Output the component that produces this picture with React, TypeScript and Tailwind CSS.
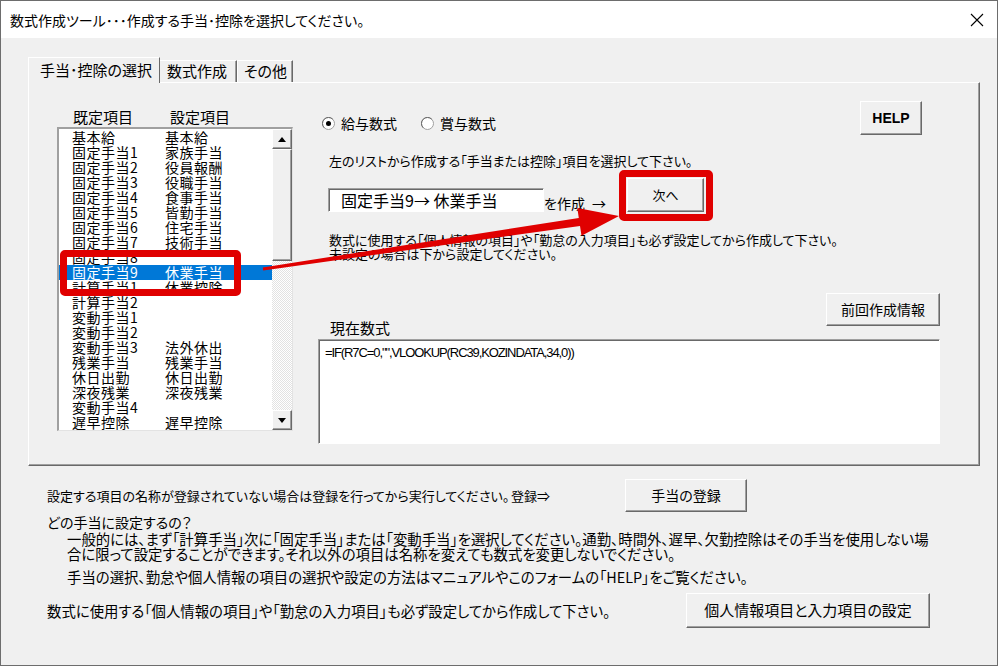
import React from 'react';

const items: [string, string][] = [
  ['基本給', '基本給'],
  ['固定手当1', '家族手当'],
  ['固定手当2', '役員報酬'],
  ['固定手当3', '役職手当'],
  ['固定手当4', '食事手当'],
  ['固定手当5', '皆勤手当'],
  ['固定手当6', '住宅手当'],
  ['固定手当7', '技術手当'],
  ['固定手当8', ''],
  ['固定手当9', '休業手当'],
  ['計算手当1', '休業控除'],
  ['計算手当2', ''],
  ['変動手当1', ''],
  ['変動手当2', ''],
  ['変動手当3', '法外休出'],
  ['残業手当', '残業手当'],
  ['休日出勤', '休日出勤'],
  ['深夜残業', '深夜残業'],
  ['変動手当4', ''],
  ['遅早控除', '遅早控除'],
];

const raised =
  'bg-[#f0f0f0] border border-t-white border-l-white border-r-[#696969] border-b-[#696969] shadow-[inset_-1px_-1px_0_#a0a0a0]';
const sunken =
  'bg-white border border-t-[#a0a0a0] border-l-[#a0a0a0] border-r-white border-b-white shadow-[inset_1px_1px_0_#696969]';

function Radio({ checked }: { checked: boolean }) {
  return (
    <svg width="13" height="13" viewBox="0 0 13 13" className="shrink-0">
      <circle cx="6.5" cy="6.5" r="6" fill="#ffffff" stroke="#a0a0a0" strokeWidth="1" />
      <path d="M2.2 10.8 A6 6 0 0 1 10.8 2.2" fill="none" stroke="#696969" strokeWidth="1" />
      {checked && <circle cx="6.5" cy="6.5" r="2.5" fill="#000000" />}
    </svg>
  );
}

function ScrollBtn({ up }: { up: boolean }) {
  return (
    <div className={`${raised} h-[20px] w-[20px] flex items-center justify-center`}>
      <svg width="8" height="5" viewBox="0 0 8 5">
        {up ? <polygon points="0,5 8,5 4,0" fill="#000" /> : <polygon points="0,0 8,0 4,5" fill="#000" />}
      </svg>
    </div>
  );
}

export default function App() {
  return (
    <div className="relative w-[998px] h-[666px] bg-[#f0f0f0] border border-[#6d6d6d] overflow-hidden font-['Noto_Sans_CJK_JP',sans-serif] text-black [font-feature-settings:'palt']">
      {/* title bar */}
      <div className="h-[37px] bg-white flex items-center justify-between pl-[9px] pr-[13px]">
        <span className="text-[14px] leading-[16px]">数式作成ツール･･･作成する手当･控除を選択してください。</span>
        <svg width="14" height="14" viewBox="0 0 14 14">
          <path d="M1 1 L13 13 M13 1 L1 13" stroke="#000" strokeWidth="1.1" />
        </svg>
      </div>

      {/* body */}
      <div className="pt-[19px]">
        <div className="ml-[27px] w-[952px]">
          {/* tabs */}
          <div className="flex items-end h-[26px] relative z-10">
            <div className="h-[26px] w-[132px] bg-[#f0f0f0] border-t border-l border-t-white border-l-white border-r border-r-[#696969] pl-[11px] pt-[3px] text-[15px] leading-[18px]">
              手当･控除の選択
            </div>
            <div className="h-[22px] w-[77px] border-t border-t-white border-r border-r-[#696969] shadow-[inset_-1px_0_0_#a0a0a0] mb-[1px] pl-[7px] pt-[1px] text-[15px] leading-[18px]">
              数式作成
            </div>
            <div className="h-[22px] w-[56px] border-t border-l border-t-white border-l-white border-r border-r-[#696969] shadow-[inset_-1px_0_0_#a0a0a0] mb-[1px] pl-[6px] pt-[1px] text-[15px] leading-[18px]">
              その他
            </div>
          </div>

          {/* panel */}
          <div className="-mt-[1px] h-[384px] border-t border-l border-t-white border-l-white border-r border-b border-r-[#696969] border-b-[#696969] shadow-[inset_-1px_-1px_0_#a0a0a0] flex">
            {/* left column */}
            <div className="ml-[28px] pt-[26px] w-[236px]">
              <div className="flex h-[15px] text-[15px] leading-[15px] mb-[3px]">
                <span className="ml-[16px] w-[97px]">既定項目</span>
                <span>設定項目</span>
              </div>
              <div className="h-[304px] border-t-2 border-l-2 border-t-[#a0a0a0] border-l-[#a0a0a0] border-r border-b border-r-[#e3e3e3] border-b-[#e3e3e3] bg-white flex">
                <div className="flex-1 pt-[1px] overflow-hidden text-[14px] leading-[15px] [font-feature-settings:normal]">
                  {items.map(([a, b], i) => (
                    <div
                      key={i}
                      className={`h-[15px] flex whitespace-nowrap tracking-[0.5px] ${i === 9 ? 'bg-[#0078d7] text-white' : ''}`}
                    >
                      <span className="w-[106px] pl-[13px]">{a}</span>
                      <span>{b}</span>
                    </div>
                  ))}
                </div>
                <div className="w-[20px] flex flex-col">
                  <ScrollBtn up />
                  <div className={`${raised} h-[112px]`} />
                  <div className="flex-1 bg-[repeating-conic-gradient(#e2e2e2_0%_25%,#ffffff_0%_50%)] bg-[length:2px_2px]" />
                  <ScrollBtn up={false} />
                </div>
              </div>
            </div>

            {/* right column */}
            <div className="ml-[25px] w-[622px] pt-[18px]">
              <div className="flex justify-between items-start">
                <div className="flex items-center mt-[15px] pl-[4px] text-[14px] leading-[15px]">
                  <Radio checked />
                  <span className="ml-[6px] w-[80px]">給与数式</span>
                  <Radio checked={false} />
                  <span className="ml-[6px]">賞与数式</span>
                </div>
                <div className={`${raised} mr-[18px] w-[62px] h-[34px] flex items-center justify-center font-['Liberation_Sans',sans-serif] font-bold text-[14px]`}>
                  HELP
                </div>
              </div>

              <div className="mt-[18px] ml-[11px] text-[13px] leading-[15px] whitespace-nowrap">
                左のリストから作成する「手当または控除」項目を選択して下さい。
              </div>

              <div className="mt-[10px] flex items-end">
                <div className={`${sunken} ml-[10px] w-[216px] h-[24px] pl-[12px] text-[16px] leading-[22px] whitespace-nowrap`}>
                  固定手当9→ 休業手当
                </div>
                <div className="w-[83px] text-[14px] leading-[16px] pb-[1px] whitespace-nowrap">
                  を作成 <span className="ml-[4px]">→</span>
                </div>
                <div className={`${raised} w-[77px] h-[34px] flex items-center justify-center text-[13px]`}>次へ</div>
              </div>

              <div className="mt-[21px] ml-[11px] text-[13px] leading-[14px] whitespace-nowrap">
                <div>数式に使用する「個人情報の項目」や「勤怠の入力項目」も必ず設定してから作成して下さい。</div>
                <div>未設定の場合は下から設定してください。</div>
              </div>

              <div className="mt-[32px] flex justify-between items-end">
                <span className="ml-[12px] mb-[4px] text-[15px] leading-[15px]">現在数式</span>
                <div className={`${raised} mb-[13px] w-[114px] h-[33px] flex items-center justify-center text-[14px]`}>
                  前回作成情報
                </div>
              </div>

              <div className={`${sunken} h-[105px] pl-[6px] pt-[5px]`}>
                <div className="font-['Liberation_Sans',sans-serif] text-[13px] leading-[15px] tracking-[-1.1px] whitespace-nowrap">
                  =IF(R7C=0,&quot;&quot;,VLOOKUP(RC39,KOZINDATA,34,0))
                </div>
              </div>
            </div>
          </div>
        </div>

        {/* bottom section */}
        <div className="mt-[13px] ml-[46px]">
          <div className="flex items-center h-[33px]">
            <span className="w-[464px] text-[13px] leading-[15px] whitespace-nowrap">
              設定する項目の名称が登録されていない場合は登録を行ってから実行してください。
            </span>
            <span className="w-[114px] text-[13px] leading-[15px]">登録⇒</span>
            <div className={`${raised} w-[122px] h-[33px] flex items-center justify-center text-[14px]`}>手当の登録</div>
          </div>
          <div className="mt-[3px] text-[14px] leading-[15px]">どの手当に設定するの？</div>
          <div className="mt-[1px] ml-[20px] text-[14.4px] leading-[15px] whitespace-nowrap">
            <div>一般的には、まず「計算手当」次に「固定手当」または「変動手当」を選択してください。通勤、時間外、遅早、欠勤控除はその手当を使用しない場</div>
            <div>合に限って設定することができます。それ以外の項目は名称を変えても数式を変更しないでください。</div>
          </div>
          <div className="mt-[8px] ml-[20px] text-[14.4px] leading-[15px] whitespace-nowrap">
            手当の選択、勤怠や個人情報の項目の選択や設定の方法はマニュアルやこのフォームの「HELP」をご覧ください。
          </div>
          <div className="mt-[9px] flex items-center h-[35px]">
            <span className="w-[639px] text-[14.4px] leading-[15px] whitespace-nowrap">
              数式に使用する「個人情報の項目」や「勤怠の入力項目」も必ず設定してから作成して下さい。
            </span>
            <div className={`${raised} w-[244px] h-[35px] flex items-center justify-center text-[15px]`}>
              個人情報項目と入力項目の設定
            </div>
          </div>
        </div>
      </div>

      {/* overlays: red highlight boxes and arrow */}
      <div className="absolute left-[59px] top-[249px] w-[181px] h-[46px] border-[7px] border-[#e00000] rounded-[5px] pointer-events-none" />
      <div className="absolute left-[618px] top-[169px] w-[94px] h-[51px] border-[7px] border-[#e00000] rounded-[5px] pointer-events-none" />
      <svg className="absolute left-0 top-0 pointer-events-none" width="998" height="666" viewBox="0 0 998 666">
        <polygon
          points="261.8,266.5 577.8,216.9 576.3,207 618,215 580.5,234.8 579,224.9 262.2,269.5"
          fill="#e00000"
        />
      </svg>
    </div>
  );
}
